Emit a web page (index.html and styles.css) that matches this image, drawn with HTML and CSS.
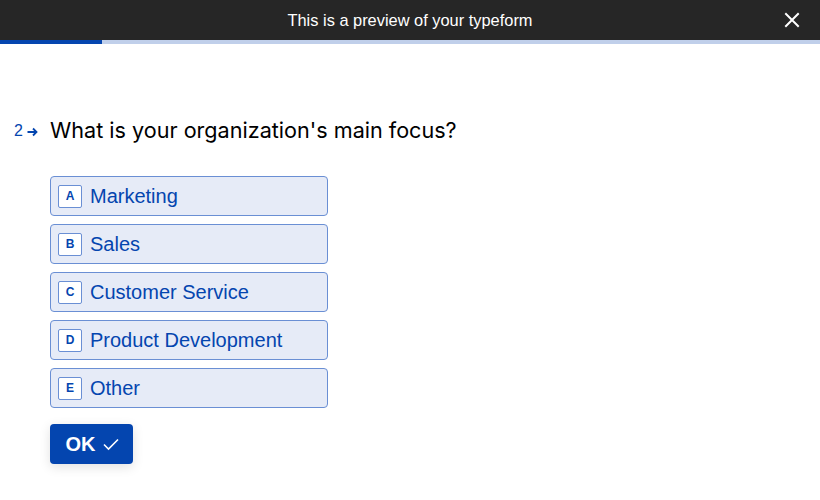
FILE: index.html
```html
<!DOCTYPE html>
<html>
<head>
<meta charset="utf-8">
<link rel="stylesheet" href="styles.css">
</head>
<body>
<div class="topbar">
  <span class="preview">This is a preview of your typeform</span>
  <span class="close"><svg width="16" height="16" viewBox="0 0 16 16"><path d="M2 2L14 14M14 2L2 14" stroke="#fff" stroke-width="2" stroke-linecap="square"/></svg></span>
</div>
<div class="progress"><div class="progress-fill"></div></div>
<main class="content">
  <div class="question">
    <span class="qnum">2<svg width="11" height="10" viewBox="0 0 11 10"><path d="M0.5 5H9.5M6 1.5L9.5 5L6 8.5" stroke="#0445af" stroke-width="1.8" fill="none"/></svg></span>
    <h1 class="qtext">What is your organization's main focus?</h1>
  </div>
  <div class="choices">
    <div class="choice"><span class="key">A</span><span class="label">Marketing</span></div>
    <div class="choice"><span class="key">B</span><span class="label">Sales</span></div>
    <div class="choice"><span class="key">C</span><span class="label">Customer Service</span></div>
    <div class="choice"><span class="key">D</span><span class="label">Product Development</span></div>
    <div class="choice"><span class="key">E</span><span class="label">Other</span></div>
  </div>
  <button class="ok">OK <svg width="18" height="14" viewBox="0 0 18 14"><path d="M2 7.5L6.5 12L16 2.5" stroke="#fff" stroke-width="1.6" fill="none"/></svg></button>
</main>
</body>
</html>
```
FILE: styles.css
```css
* { box-sizing: border-box; }
html, body { margin: 0; padding: 0; background: #fff; }
body { font-family: "Liberation Sans", Arial, sans-serif; width: 820px; height: 500px; overflow: hidden; }
.topbar {
  height: 40px; background: #262626; color: #fff;
  display: flex; align-items: center; justify-content: center; position: relative;
}
.preview { font-size: 16.4px; }
.close { position: absolute; right: 20px; top: 12px; display: flex; }
.progress { height: 4px; background: #c0cfea; }
.progress-fill { width: 102px; height: 4px; background: #0445af; }
.content { padding: 72px 0 0 14px; }
.question { display: flex; align-items: baseline; }
.qnum { color: #0445af; font-size: 16px; width: 36px; display: flex; align-items: center; gap: 4px; position: relative; top: -2px; }
.qnum svg { margin-top: 1px; }
.qtext { margin: 0; font-family: Inter, "Liberation Sans", sans-serif; font-weight: 400; font-size: 21.6px; color: #000; line-height: 28px; }
.choices { margin: 32px 0 0 36px; display: flex; flex-direction: column; gap: 8px; width: 278px; }
.choice {
  height: 40px; border: 1px solid #6a8fd4; border-radius: 4px; background: #e6ebf7;
  display: flex; align-items: center; padding-left: 7px;
}
.key {
  width: 24px; height: 23px; border: 1px solid #6a8fd4; border-radius: 2px; background: #fff;
  color: #0445af; font-size: 12px; font-weight: 700; display: flex; align-items: center; justify-content: center;
}
.label { margin-left: 8px; color: #0445af; font-size: 20px; }
.ok {
  margin: 16px 0 0 36px; width: 83px; height: 40px; border: 0; border-radius: 4px; background: #0445af;
  color: #fff; font-family: "Liberation Sans", Arial, sans-serif; font-weight: 700; font-size: 20px;
  display: flex; align-items: center; justify-content: center; gap: 6px; padding: 0 0 0 2px;
  box-shadow: 0 3px 12px rgba(0,0,0,0.12);
}
```
